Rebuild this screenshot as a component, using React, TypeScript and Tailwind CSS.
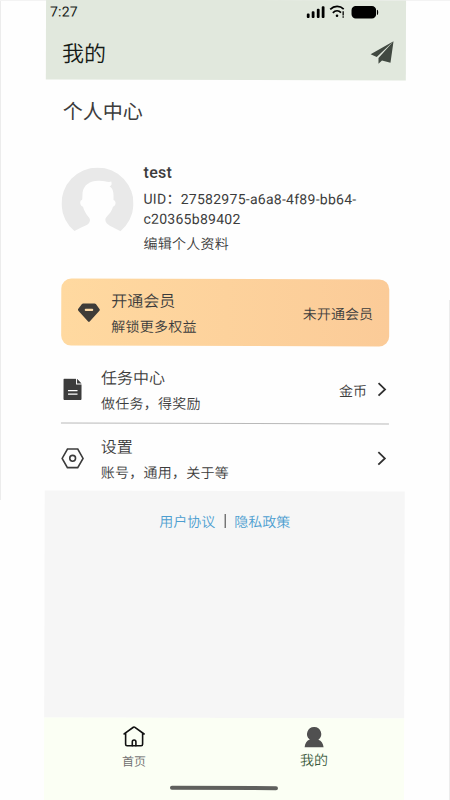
import { ReactNode } from 'react';

const legalLinks = ['用户协议', '隐私政策'];

function Chevron() {
  return (
    <svg width="10" height="16" viewBox="0 0 10 16" fill="none" stroke="#303030" strokeWidth="1.8">
      <path d="M1.5 1.8 8 8l-6.5 6.2" />
    </svg>
  );
}

function StatusIcons() {
  return (
    <svg width="74" height="16" viewBox="0 0 74 16" fill="#000">
      <rect x="0.8" y="9.2" width="2.8" height="4.6" rx="1" />
      <rect x="5.7" y="7" width="2.8" height="6.8" rx="1" />
      <rect x="10.8" y="4.4" width="2.8" height="9.4" rx="1" />
      <rect x="15.7" y="2" width="2.8" height="11.8" rx="1" />
      <g fill="none" stroke="#000" strokeWidth="1.7">
        <path d="M24.2 5.200c4-4 9.600-4 13.500-.4" />
        <path d="M26.800 8.500c2.500-2.400 5.900-2.400 8.200-.2" />
      </g>
      <circle cx="31" cy="11.500" r="1.300" />
      <rect x="36.500" y="7" width="1.300" height="4.200" />
      <rect x="36.500" y="12" width="1.300" height="1.400" />
      <rect x="45.500" y="1.600" width="24.600" height="12.600" rx="4.200" />
      <path d="M71 5.400c1.600 0 1.600 5.200 0 5.200z" />
    </svg>
  );
}

function Avatar() {
  return (
    <svg width="72" height="64" viewBox="0 0 72 64" fill="#e9e9e9">
      <path d="M13 63.5A36 36 0 1 1 59 63.5C53 59.8 48 58.5 45.2 55.5C43.5 53.3 43.4 51 45 49.2C48 46 50.500 43 51.500 39C54.500 38.500 55 33 52 32.200C52 27 52.500 21 48 18.800C50 18 50.500 16 49.700 13.800C46.500 15 43 13 38 13C29 12.500 22 17 21 25C20.800 28 21 30 20.600 32.200C17.500 33 18.500 38.500 21.500 39C22.500 43 25 47 27.500 49.800C29 51.800 28.800 54 27 56C24 58.500 18 60 13 63.500Z" />
    </svg>
  );
}

type MenuRowProps = {
  icon: ReactNode;
  title: string;
  detail: string;
  extra?: string;
};

function MenuRow({ icon, title, detail, extra }: MenuRowProps) {
  return (
    <div className="flex h-[68px] items-center">
      <div className="flex w-10 shrink-0 items-center pt-px">{icon}</div>
      <div className="flex-1 pt-1">
        <div className="text-base leading-[26px]">{title}</div>
        <div className="text-sm leading-[25px] tracking-[0.25px]">{detail}</div>
      </div>
      {extra && <span className="mt-[3px] mr-2.5 text-sm">{extra}</span>}
      <div className="mr-0.5">
        <Chevron />
      </div>
    </div>
  );
}

export default function App() {
  return (
    <div className="relative h-[800px] w-[450px] overflow-hidden bg-[#fefefe] font-[Roboto,'Noto_Sans_CJK_SC',sans-serif] font-[350] text-[#3c3c3c]">
      {/* Page edges */}
      <div className="absolute top-0 left-0 h-[500px] w-px bg-[#ececec]" />
      <div className="absolute top-0 left-0 h-px w-full bg-[#f3f3f3]" />
      <div className="absolute right-0 bottom-0 h-[500px] w-px bg-[#ececec]" />

      <div className="mx-auto flex h-[802px] w-[360px] rotate-[0.15deg] flex-col">
        <header className="h-20 shrink-0 bg-[#e1e8dd] text-[#151a16]">
          <div className="flex h-6 items-center justify-between pr-[26px] pl-1">
            <span className="text-sm font-normal tracking-[0.2px]">7:27</span>
            <StatusIcons />
          </div>
          <div className="flex h-14 items-center justify-between pr-3 pl-4">
            <h1 className="pt-[5px] text-[22px] font-[350]">我的</h1>
            <svg width="24" height="24" viewBox="0 0 24 24" fill="#414941">
              <path d="M23.600.7.700 13.900l6.100 2.700zM23.600.7 8.600 17.500v5.900l3.500-3.200 8.500 2.200z" />
            </svg>
          </div>
        </header>

        <main className="h-[411px] shrink-0 px-4 pt-[17px]">
          <h2 className="pl-px text-xl leading-[30px] font-normal">个人中心</h2>

          {/* Profile */}
          <section className="mt-8 flex h-[98px]">
            <div className="mt-[9px] w-[82px] shrink-0">
              <Avatar />
            </div>
            <div className="text-sm leading-5 font-normal">
              <div className="text-base leading-7 font-medium tracking-[0.3px]">test</div>
              <div className="pt-0.5 tracking-[0.27px]">
                UID：27582975-a6a8-4f89-bb64-
                <br />
                c20365b89402
              </div>
              <div className="pt-[5px] font-[350] tracking-[0.25px]">编辑个人资料</div>
            </div>
          </section>

          {/* Membership */}
          <section className="mt-[22px] flex h-[67px] items-center rounded-[10px] bg-gradient-to-r from-[#ffd9a0] to-[#fbcb98] px-4">
            <svg width="24" height="20" viewBox="0 0 24 20" fill="#3f3c38">
              <path d="M6 .8h11.200q1 0 1.600.8l3.600 4.900q.5.800-.2 1.600l-9.700 10.800q-.8.800-1.600 0L1.100 8.100Q.4 7.300.9 6.500l3.600-4.900Q5 .8 6 .8Z" />
              <rect x="7.500" y="6" width="8.500" height="2.300" rx="1" fill="#fddaa7" />
            </svg>
            <div className="ml-2.5 flex-1 pt-1">
              <div className="text-base leading-[26px]">开通会员</div>
              <div className="text-sm leading-[25px] tracking-[0.25px]">解锁更多权益</div>
            </div>
            <span className="pt-0.5 text-sm tracking-[0.1px]">未开通会员</span>
          </section>

          {/* Menu */}
          <section className="mt-[9px]">
            <MenuRow
              title="任务中心"
              detail="做任务，得奖励"
              extra="金币"
              icon={
                <svg width="22" height="22" viewBox="0 0 22 22" fill="#3c3c3c">
                  <path d="M3.500 0H15v6h5.500v14.500q0 1-1 1h-16q-1 0-1-1V1q0-1 1-1ZM16 .2 20.500 5H16z" />
                  <path d="M7 12h9.500M7 15.500h9.500" stroke="#fff" strokeWidth="1.100" />
                </svg>
              }
            />
            <div className="h-px bg-[#b9b9b9]" />
            <MenuRow
              title="设置"
              detail="账号，通用，关于等"
              icon={
                <svg width="24" height="22" viewBox="0 0 24 22" fill="none" stroke="#3c3c3c" strokeWidth="1.600">
                  <path d="M6.600 1.400h10.300L22.200 10.800l-5.300 9.200H6.600L1.300 10.800z" />
                  <circle cx="11.800" cy="10.700" r="2.900" />
                </svg>
              }
            />
          </section>
        </main>

        <footer className="flex flex-1 items-start justify-center gap-[9px] bg-[#f6f6f6] pt-[21px] text-sm leading-5 text-[#4d9ed0]">
          <a>{legalLinks[0]}</a>
          <div className="mt-0.5 h-3.5 w-px bg-[#3c3c3c]" />
          <a>{legalLinks[1]}</a>
        </footer>

        {/* Tab bar */}
        <nav className="h-[84px] shrink-0 bg-[#fbfff4]">
          <div className="grid h-[60px] grid-cols-2">
            <div className="flex flex-col items-center pt-2 text-xs leading-[18px] text-[#6c6c6c]">
              <svg width="24" height="22" viewBox="0 0 24 22" fill="none" stroke="#111" strokeWidth="1.600" strokeLinejoin="round" strokeLinecap="round">
                <path d="M2 8.200 11.200 1.500q.8-.6 1.600 0L22 8.200M3.500 7.500v11q0 1.500 1.500 1.500h14q1.500 0 1.500-1.500v-11" />
                <path d="M10.200 20v-4q0-1.800 1.800-1.800t1.800 1.800v4" />
              </svg>
              <span className="mt-[5px]">首页</span>
            </div>
            <div className="flex flex-col items-center pt-2 text-sm leading-5 text-[#3b5b3d]">
              <svg width="20" height="22" viewBox="0 0 20 22" fill="#505050">
                <path d="M10 .8a7 7 0 0 1 4.300 12.600c3 1 4.800 3.800 5.200 7.600H.5c.4-3.800 2.200-6.600 5.200-7.600A7 7 0 0 1 10 .8Z" />
              </svg>
              <span className="mt-0.5">我的</span>
            </div>
          </div>
          <div className="mx-auto mt-[8px] h-1 w-[108px] rounded-full bg-[#5f605d]" />
        </nav>
      </div>
    </div>
  );
}
